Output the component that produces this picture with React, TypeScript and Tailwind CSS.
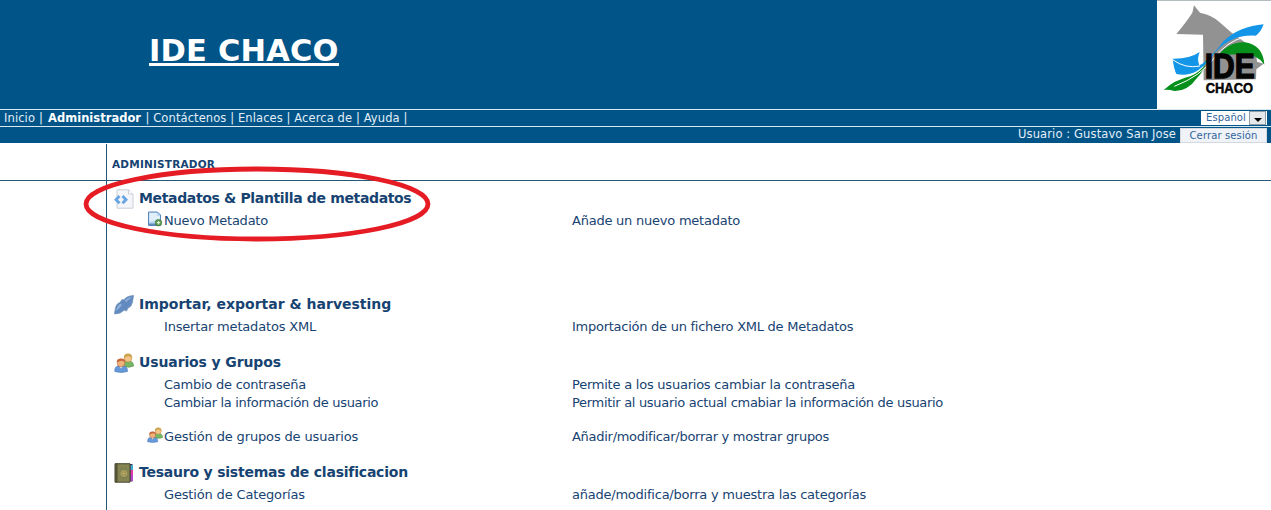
import type { ReactNode } from "react";

function Logo() {
  return (
    <svg viewBox="0 0 342 327" className="block h-[109px] w-[114px] bg-white" aria-label="IDE Chaco">
      <rect width="342" height="3" fill="#b5bcc0" />
      <path d="M111 16 L129 38 Q165 45 187 66 L224 98 L296 150 L300 185 L320 191 L298 208 L297 238 L140 241 L138 104 L58 102 Q88 66 106 38 Z" fill="#929292" />
      <path d="M178 172 Q215 125 262 127 Q318 134 322 194 Q306 166 262 163 Q213 160 178 172 Z" fill="#078f1c" />
      <path d="M20 270 Q52 240 100 229 Q128 218 146 192 Q138 216 120 234 Q92 274 52 273 Q34 268 20 270 Z" fill="#078f1c" />
      <path d="M47 176 Q98 177 128 156 Q119 176 127 196 Q135 194 145 184 Q172 160 200 123 Q249 78 320 73 Q311 98 296 107 Q222 103 175 157 Q147 196 119 214 Q91 229 58 222 Q50 204 47 176 Z" fill="#1395e8" />
      <path d="M47 179 Q85 207 129 198 M52 259 Q132 228 172 174 Q209 125 262 111" fill="none" stroke="#fff" strokeWidth="3" />
      <g fill="#050505" stroke="#050505" fontFamily="Liberation Sans, Arial, sans-serif" fontWeight="bold">
        <text x="143" y="235" fontSize="104" strokeWidth="4" textLength="150" lengthAdjust="spacingAndGlyphs">IDE</text>
        <text x="146" y="279" fontSize="46" strokeWidth="1.5" textLength="142" lengthAdjust="spacingAndGlyphs">CHACO</text>
      </g>
    </svg>
  );
}

function CodePageIcon() {
  return (
    <svg viewBox="0 0 20 20" className="size-5">
      <path d="M3 .8h11.5L19 5v14.2H3z" fill="#f4f6f9" stroke="#c9ced8" />
      <path d="M14.5 1v4H19" fill="#fff" stroke="#c9ced8" />
      <path d="M5.500 7 2 10.700l3.500 3.600M8.500 7l3.500 3.700-3.500 3.600" fill="none" stroke="#6aa5e3" strokeWidth="2.900" />
    </svg>
  );
}

function NewPageIcon() {
  return (
    <svg viewBox="0 0 16 16" className="size-4">
      <path d="M1.500 1h9l3 3v10.500h-12z" fill="#b9d7f5" stroke="#5b87bd" />
      <path d="M2.500 2h7.500v3h3v3.500l-10.500 2z" fill="#e1effc" />
      <path d="M2 12.500h7v1.500H2z" fill="#5f87b2" />
      <circle cx="11.500" cy="11.700" r="3.300" fill="#579849" stroke="#3e7339" strokeWidth=".6" />
      <path d="M11.500 10v3.400M9.800 11.700h3.400" stroke="#d9ecd4" strokeWidth="1.200" />
    </svg>
  );
}

function PlugIcon() {
  return (
    <svg viewBox="0 0 20 20" className="size-5">
      <path d="M.5 19 1.500 12.500Q3 8 6 7.500L8 4.500 10 5Q12 1 19.500.5L18.500 7Q17.500 12 14 13L12.500 16 10 15Q7 19 .5 19Z" fill="#638bc0" stroke="#7494bd" strokeWidth=".8" />
      <path d="M2 16Q3 10 7 8.500L8 10Q6 13 2 16M11 6Q13 2.500 18 2L12 7Z" fill="#8fb2dc" />
      <path d="m6.500 7.500 5.500 7M8.500 5.500 14 12" stroke="#5b84b8" strokeWidth=".6" />
    </svg>
  );
}

function UsersIcon({ small = false }: { small?: boolean }) {
  return (
    <svg viewBox="0 0 20 20" className={small ? "size-4" : "size-5"}>
      <path d="M9 13Q8.500 7.500 14 8q5.500-.3 5.700 5Q15 15.500 9 13Z" fill="#76b665" stroke="#609653" strokeWidth=".6" />
      <circle cx="14" cy="5.200" r="3.800" fill="#f3c487" stroke="#b8893f" strokeWidth=".6" />
      <path d="M9.800 5Q9.700.5 14 .5T18.200 5Q15 2.500 13 3.500T9.800 5" fill="#cda34d" />
      <path d="M.8 18.500Q0 12.500 7 12.500t6.500 6Q7 20.500.8 18.500Z" fill="#6599da" stroke="#4d79b8" strokeWidth=".6" />
      <path d="m5.500 13 1.500 2.500L8.500 13" fill="#fff" />
      <circle cx="7" cy="10" r="3.800" fill="#f1b27c" stroke="#b8683c" strokeWidth=".6" />
      <path d="M2.800 9.500Q2.500 5.500 7 5.500t4.200 4Q9 7.300 6.500 8T2.800 9.500" fill="#c4683c" />
    </svg>
  );
}

function BookIcon() {
  return (
    <svg viewBox="0 0 20 20" className="size-5">
      <path d="M15 1h3.500v17.500H15z" fill="#39334c" />
      <path d="M16.500 2H19v5h-2.500z" fill="#45a9d8" />
      <path d="M16.500 7H19v5h-2.500z" fill="#df38a6" />
      <path d="M16.500 12H19v6h-2.500z" fill="#b947ce" />
      <path d="M1 .7h15v18.500H1z" fill="#7f8150" stroke="#4b4932" />
      <path d="M1 .7h2.500v18.500H1z" fill="#555333" />
      <path d="M5 3h9v14H5z" fill="none" stroke="#938d58" strokeWidth=".6" />
      <circle cx="9.800" cy="10.500" r="3" fill="#9b8e50" stroke="#b9ac68" strokeWidth=".8" />
      <path d="M8 10.500h3.600M9.800 8.500v4" stroke="#c7bb78" strokeWidth=".6" />
    </svg>
  );
}

function Section({ icon, title, children }: { icon: ReactNode; title: ReactNode; children: ReactNode }) {
  return (
    <section>
      <h2 className="flex h-[26px] items-center text-[14px] font-bold">
        <span className="mt-px w-[26px] shrink-0 pl-px">{icon}</span>
        {title}
      </h2>
      {children}
    </section>
  );
}

function Row({ icon, label, text }: { icon?: ReactNode; label: ReactNode; text: ReactNode }) {
  return (
    <div className="flex h-[18px] items-center text-[13px] leading-[18px]">
      <span className="flex w-[51px] shrink-0 justify-end pr-[1px] pb-[3px]">{icon}</span>
      <a className="w-[408px] shrink-0 pt-[2px]">{label}</a>
      <span className="pt-[2px]">{text}</span>
    </div>
  );
}

export default function App() {
  return (
    <div className="relative flex h-[510px] w-[1271px] flex-col overflow-hidden bg-white font-['DejaVu_Sans',Verdana,sans-serif] whitespace-nowrap text-[#174372]">
      <header className="flex h-[109px] shrink-0 justify-between bg-[#015488]">
        <h1 className="pt-[30px] pl-[149px] text-[30.5px] leading-[41px] font-bold text-white">
          <span className="block h-[36px] w-[190px] border-b-[3px] border-white tracking-[0.2px]">IDE CHACO</span>
        </h1>
        <Logo />
      </header>
      <nav className="flex h-[18px] shrink-0 items-center justify-between border-y border-[#d9e7ef] bg-[#015488] text-[11.5px] leading-4 text-[#e3eef7]">
        <div className="flex pb-px pl-1">
          <span className="w-[35px] tracking-[0.1px]">Inicio</span>
          <span className="w-[9px]">|</span>
          <b className="w-[97.5px] tracking-[0.02px] text-white">Administrador</b>
          <span className="tracking-[0.1px]">| Contáctenos | Enlaces | Acerca de | Ayuda |</span>
        </div>
        <div className="mr-1 flex h-[14px] w-[66px] items-center bg-white pl-[5px] text-[10px] text-[#31659c]">
          <span className="w-[43px] tracking-[0.1px]">Español</span>
          <span className="flex h-[14px] w-[17px] items-center justify-center border border-[#8e9da8] bg-[#e5e8eb]">
            <svg viewBox="0 0 8 4" className="mt-1 h-1 w-2"><path d="M0 0h8L4 4z" fill="#000" /></svg>
          </span>
        </div>
      </nav>
      <div className="flex h-4 shrink-0 items-center justify-end bg-[#015488] pr-1 text-[11.5px] text-[#e3eef7]">
        <span className="mr-[3px] w-[159px] tracking-[0.12px]">Usuario : Gustavo San Jose</span>
        <button className="flex h-[15px] w-[87px] items-center justify-center border border-[#d4d9df] bg-[#eff2f6] text-[10px] tracking-[0.12px] text-[#31659c]">Cerrar sesión</button>
      </div>
      <div className="flex h-[38px] shrink-0 border-b border-[#275977]">
        <div className="mt-px w-[107px] border-r border-[#275977]" />
        <h2 className="pt-[13px] pl-[5px] text-[10.5px] leading-4 font-bold tracking-[0.2px]">ADMINISTRADOR</h2>
      </div>
      <div className="flex flex-1">
        <div className="w-[107px] shrink-0 border-r border-[#275977]" />
        <main className="pt-[4px] pl-[6px]">
          <Section icon={<CodePageIcon />} title={<span className="tracking-[-0.35px]">Metadatos &amp; Plantilla de metadatos</span>}>
            <Row icon={<NewPageIcon />} label={<span className="tracking-[-0.24px]">Nuevo Metadato</span>} text={<span className="tracking-[-0.23px]">Añade un nuevo metadato</span>} />
          </Section>
          <div className="h-[62px]" />
          <Section icon={<PlugIcon />} title={<span>Importar, exportar &amp; harvesting</span>}>
            <Row label={<span className="tracking-[-0.18px]">Insertar metadatos XML</span>} text={<span className="tracking-[-0.26px]">Importación de un fichero XML de Metadatos</span>} />
          </Section>
          <div className="h-[14px]" />
          <Section icon={<UsersIcon />} title={<span className="tracking-[-0.12px]">Usuarios y Grupos</span>}>
            <Row label={<span className="tracking-[-0.24px]">Cambio de contraseña</span>} text={<span className="tracking-[-0.23px]">Permite a los usuarios cambiar la contraseña</span>} />
            <Row label={<span className="tracking-[-0.31px]">Cambiar la información de usuario</span>} text={<span className="tracking-[-0.31px]">Permitir al usuario actual cmabiar la información de usuario</span>} />
            <div className="h-4" />
            <Row icon={<UsersIcon small />} label={<span className="tracking-[-0.15px]">Gestión de grupos de usuarios</span>} text={<span className="tracking-[-0.28px]">Añadir/modificar/borrar y mostrar grupos</span>} />
          </Section>
          <div className="h-[14px]" />
          <Section icon={<BookIcon />} title={<span className="tracking-[-0.22px]">Tesauro y sistemas de clasificacion</span>}>
            <Row label={<span className="tracking-[-0.16px]">Gestión de Categorías</span>} text={<span className="tracking-[-0.23px]">añade/modifica/borra y muestra las categorías</span>} />
          </Section>
        </main>
      </div>
      <svg viewBox="0 0 348 78" className="absolute top-[165px] left-[83px] h-[78px] w-[348px]">
        <ellipse cx="174" cy="39" rx="171" ry="35" fill="none" stroke="#e51c23" strokeWidth="4.800" />
      </svg>
    </div>
  );
}
